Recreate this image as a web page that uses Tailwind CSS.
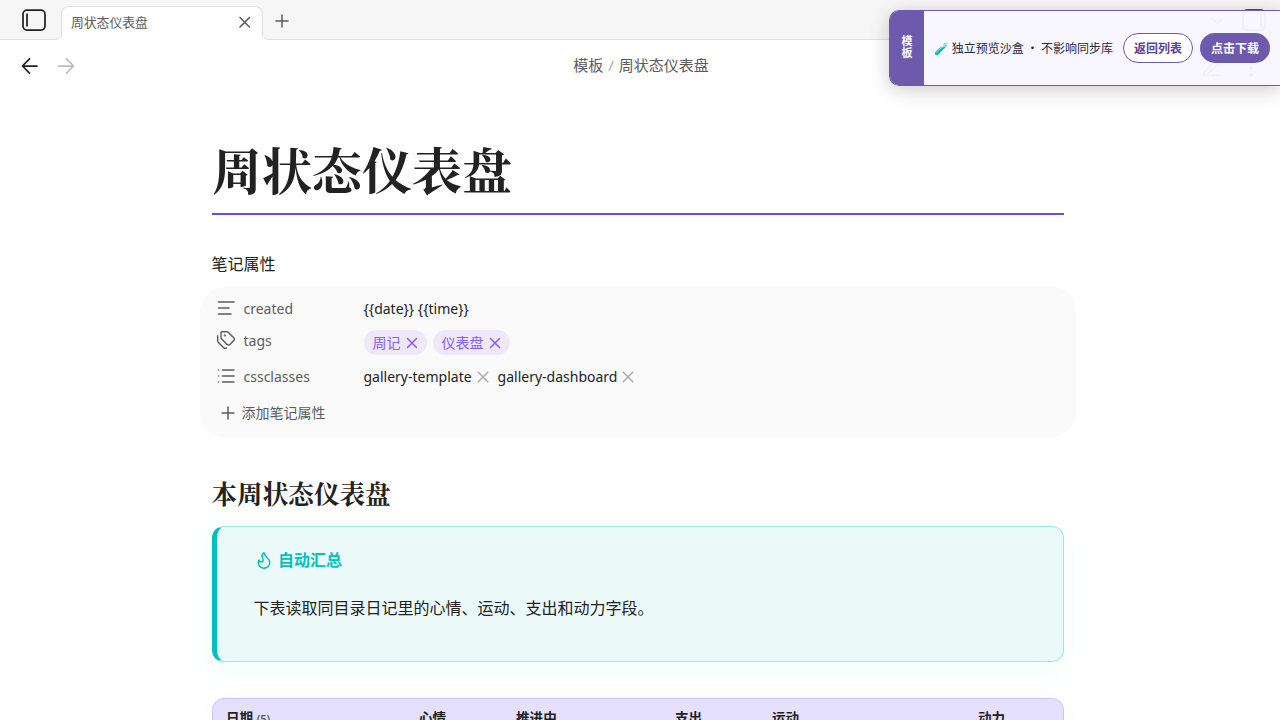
<!DOCTYPE html>
<html lang="zh-CN">
<head>
  <meta charset="UTF-8">
  <meta name="viewport" content="width=device-width, initial-scale=1.0">
  <title>周状态仪表盘</title>
  <script src="https://cdn.jsdelivr.net/npm/@tailwindcss/browser@4"></script>
</head>
<body class="relative h-screen overflow-hidden bg-white font-['Noto_Sans','Noto_Sans_CJK_SC',sans-serif] text-[#222222]">
  <!-- Tab bar -->
  <header class="flex h-10 items-end border-b border-[#e0e0e0] bg-[#f6f6f6]">
    <div class="flex h-10 w-[61px] items-center pl-[21px]">
      <svg class="h-6 w-[26px]" viewBox="0 0 26 24" fill="none" stroke="#222222" stroke-width="1.75" stroke-linecap="round">
        <rect x="2" y="3.2" width="22" height="19.8" rx="4" />
        <path d="M6 7.2v11.6" />
      </svg>
    </div>
    <div class="relative -mb-px flex h-[34px] w-[202px] items-center justify-between rounded-t-lg border border-b-0 border-[#e0e0e0] bg-white pr-2.5 pb-0.5 pl-[9px]">
      <svg class="absolute bottom-0 -left-2 size-2" viewBox="0 0 8 8" fill="none">
        <path d="M8.5 0C8.5 4.5 5 7.5 0 7.5V8h9V0z" fill="#fff" />
        <path d="M8.5 0C8.5 4.5 5 7.5 0 7.5" stroke="#e0e0e0" />
      </svg>
      <span class="text-[12.8px] leading-none text-[#5c5c5c]">周状态仪表盘</span>
      <svg class="size-[15px]" viewBox="0 0 15 15" fill="none" stroke="#5c5c5c" stroke-width="1.6" stroke-linecap="round"><path d="M3 2.5l9.500 9.500M12.500 2.500L3 12" /></svg>
      <svg class="absolute -right-2 bottom-0 size-2" viewBox="0 0 8 8" fill="none">
        <path d="M-.5 0C-.5 4.5 3 7.5 8 7.5V8H-1V0z" fill="#fff" />
        <path d="M-.5 0C-.5 4.5 3 7.5 8 7.5" stroke="#e0e0e0" />
      </svg>
    </div>
    <div class="flex h-10 items-center pl-3">
      <svg class="mt-0.5 size-[15px]" viewBox="0 0 15 15" fill="none" stroke="#5c5c5c" stroke-width="1.5" stroke-linecap="round"><path d="M7 2v12M1 8h12" /></svg>
    </div>
    <div class="ml-auto flex h-10 items-center gap-[18px] pr-[13px]">
      <svg class="mt-1 h-2 w-3" viewBox="0 0 12 8" fill="none" stroke="#5c5c5c" stroke-width="1.5"><path d="M1.500 1.500l5 5 5-5" /></svg>
      <svg class="h-6 w-[26px]" viewBox="0 0 26 24" fill="none" stroke="#222222" stroke-width="1.75" stroke-linecap="round"><rect x="2" y="3.2" width="22" height="19.8" rx="4" /><path d="M20 7.2v11.6" /></svg>
    </div>
  </header>

  <!-- View header -->
  <nav class="flex h-[52px] items-center justify-between pr-[20px] pl-[21px]">
    <div class="flex w-[120px] gap-[18px]">
      <svg class="size-[18px]" viewBox="0 0 18 18" fill="none" stroke="#222222" stroke-width="1.75" stroke-linecap="round" stroke-linejoin="round"><path d="M16 9H1.500M8.500 1.800L1.500 9l7 7.200" /></svg>
      <svg class="size-[18px]" viewBox="0 0 18 18" fill="none" stroke="#bdbdbd" stroke-width="1.75" stroke-linecap="round" stroke-linejoin="round"><path d="M1.500 9h15M9.500 1.800L16.500 9l-7 7.200" /></svg>
    </div>
    <div class="flex items-center gap-[5px] pb-0.5 pl-px text-[15px] leading-none text-[#5c5c5c]">
      <span>模板</span><span class="text-[#ababab]">/</span><span>周状态仪表盘</span>
    </div>
    <div class="flex w-[120px] items-center justify-end gap-[19px] pt-1">
      <svg class="size-[22px]" viewBox="0 0 24 24" fill="none" stroke="#5c5c5c" stroke-width="1.75" stroke-linecap="round" stroke-linejoin="round"><path d="M12 20h9M16.500 3.500a2.100 2.100 0 0 1 3 3L7 19l-4 1 1-4z" /></svg>
      <svg class="size-[18px]" viewBox="0 0 24 24" fill="#5c5c5c"><circle cx="12" cy="3" r="2" /><circle cx="12" cy="12" r="2" /><circle cx="12" cy="21" r="2" /></svg>
    </div>
  </nav>

  <!-- Note -->
  <main class="ml-[211.5px] w-[852.5px]">
    <h1 class="mt-[41px] h-[82px] border-b-2 border-[#7048f0] pl-[0.5px] font-['Noto_Serif_CJK_SC','Noto_Serif_SC',serif] text-[50px] leading-[70px] font-bold">周状态仪表盘</h1>

    <section class="mt-[37px]">
      <h2 class="h-6 text-base leading-6">笔记属性</h2>
      <div class="-mx-3 mt-[11px] h-[150px] rounded-3xl bg-[#fafafa] pl-4 text-sm">
        <div class="flex h-11 items-center">
          <svg class="mr-2 -mt-0.5 size-5" viewBox="0 0 20 20" fill="none" stroke="#5c5c5c" stroke-width="1.5" stroke-linecap="round"><path d="M2.500 4h15.500M2.500 10h10.500M2.500 16h12.500" /></svg>
          <span class="w-[120px] text-[#5c5c5c]">created</span>
          <span>{{date}} {{time}}</span>
        </div>
        <div class="-mt-0.5 flex h-6 items-center">
          <svg class="mr-2 -mt-0.5 size-5" viewBox="0 0 24 24" fill="none" stroke="#5c5c5c" stroke-width="1.75" stroke-linecap="round" stroke-linejoin="round">
            <path d="M13.172 2a2 2 0 0 1 1.414.586l6.710 6.710a2.400 2.400 0 0 1 0 3.408l-4.592 4.592a2.400 2.400 0 0 1-3.408 0l-6.710-6.710A2 2 0 0 1 6 9.172V3a1 1 0 0 1 1-1z" />
            <path d="M2 7v6.172a2 2 0 0 0 .586 1.414l6.710 6.710a2.400 2.400 0 0 0 3.191.193" />
            <circle cx="10.500" cy="6.500" r=".5" fill="#5c5c5c" />
          </svg>
          <span class="w-[120px] text-[#5c5c5c]">tags</span>
          <div class="mt-[3px] flex gap-1.5 text-[#8a5cf5]">
            <span class="flex h-[25px] items-center gap-1 rounded-full bg-[#eee8f9] pr-2 pl-[9px]">周记
              <svg class="size-3.5" viewBox="0 0 14 14" fill="none" stroke="currentColor" stroke-width="1.5" stroke-linecap="round"><path d="M2.500 2.500l9 9M11.500 2.500l-9 9" /></svg>
            </span>
            <span class="flex h-[25px] items-center gap-1 rounded-full bg-[#eee8f9] pr-2 pl-[9px]">仪表盘
              <svg class="size-3.5" viewBox="0 0 14 14" fill="none" stroke="currentColor" stroke-width="1.5" stroke-linecap="round"><path d="M2.500 2.500l9 9M11.500 2.500l-9 9" /></svg>
            </span>
          </div>
        </div>
        <div class="mt-1.5 flex h-9 items-center">
          <svg class="mr-2 -mt-0.5 size-5" viewBox="0 0 20 20" fill="none" stroke="#5c5c5c" stroke-width="1.5" stroke-linecap="round"><path d="M6.500 4h11.500M6.500 10h11.500M6.500 16h11.500M2.500 4h.01M2.500 10h.01M2.500 16h.01" /></svg>
          <span class="w-[120px] text-[#5c5c5c]">cssclasses</span>
          <span>gallery-template</span>
          <svg class="mr-2 ml-1 size-3.5" viewBox="0 0 14 14" fill="none" stroke="#ababab" stroke-width="1.5" stroke-linecap="round"><path d="M2.300 2.300l9.400 9.400M11.700 2.300l-9.400 9.400" /></svg>
          <span>gallery-dashboard</span>
          <svg class="ml-1 size-3.5" viewBox="0 0 14 14" fill="none" stroke="#ababab" stroke-width="1.5" stroke-linecap="round"><path d="M2.300 2.300l9.400 9.400M11.700 2.300l-9.400 9.400" /></svg>
        </div>
        <div class="flex h-9 items-center gap-1.5 pl-1 text-[#5c5c5c]">
          <svg class="size-4" viewBox="0 0 16 16" fill="none" stroke="currentColor" stroke-width="1.5" stroke-linecap="round"><path d="M8 2v12M2 8h12" /></svg>
          添加笔记属性
        </div>
      </div>
    </section>

    <h2 class="mt-[35px] h-[43px] font-['Noto_Serif_CJK_SC','Noto_Serif_SC',serif] text-[25.6px] leading-[42px] font-bold">本周状态仪表盘</h2>

    <div class="mt-[11px] h-[136px] rounded-xl border border-l-[5px] border-[#99e6e4] border-l-[#00bfbc] bg-[#ebf9f9] pt-[19px] pl-[37px] shadow-[0_8px_24px_rgba(0,191,188,0.05)]">
      <div class="flex h-7 items-center gap-[5px] pl-px font-bold text-[#00bfbc]">
        <svg class="size-[18px]" viewBox="0 0 22 22" fill="none" stroke="currentColor" stroke-width="1.75" stroke-linecap="round" stroke-linejoin="round"><path d="M7.500 13.500A2.500 2.500 0 0 0 10 11c0-1.380-.5-2-1-3-1.072-2.143-.224-4.054 2-6 .5 2.500 2 4.900 4 6.500 2 1.600 3 3.500 3 5.500a7 7 0 1 1-14 0c0-1.153.433-2.294 1-3a2.500 2.500 0 0 0 2.500 2.500z" /></svg>
        <span class="pl-[0.5px]">自动汇总</span>
      </div>
      <p class="mt-5 leading-7">下表读取同目录日记里的心情、运动、支出和动力字段。</p>
    </div>

    <div class="mt-9 grid h-20 grid-cols-[193px_97px_159px_97px_206px_1fr] rounded-t-xl border border-[#cdc2fb] bg-[#e6e0ff] pt-[7px] pl-[13.5px] text-[13.6px] leading-6 font-bold shadow-[0_8px_24px_rgba(112,72,232,0.04)]">
      <div>日期 <span class="text-[11px] font-semibold text-[#5c5c5c]">(5)</span></div>
      <div>心情</div>
      <div>推进中</div>
      <div>支出</div>
      <div>运动</div>
      <div>动力</div>
    </div>
  </main>

  <!-- Floating template banner -->
  <aside class="absolute top-2.5 right-0 flex h-[76px] w-[391px] overflow-hidden rounded-l-[10px] border border-r-0 border-[#6e5aad] bg-[#f8f6ff]/96 text-xs shadow-[0_4px_20px_rgba(0,0,0,0.2)]">
    <div class="flex w-[34px] flex-col items-center justify-center bg-[#6e5aad] pb-0.5 text-[11px] leading-3 font-bold text-white">
      <p class="w-[11px]">模板</p>
    </div>
    <div class="flex flex-1 items-center pl-2.5 font-['Noto_Sans_CJK_SC',sans-serif] text-[#2d2640]">
      <span class="w-[189px] whitespace-nowrap">🧪 独立预览沙盒 · 不影响同步库</span>
      <button class="h-[30px] w-[70px] rounded-full border border-[#6e5aad] bg-white font-bold text-[#5a4399]">返回列表</button>
      <button class="ml-[7px] h-[30px] w-[70px] rounded-full bg-[#6e5aad] font-bold text-white">点击下载</button>
    </div>
  </aside>
</body>
</html>
